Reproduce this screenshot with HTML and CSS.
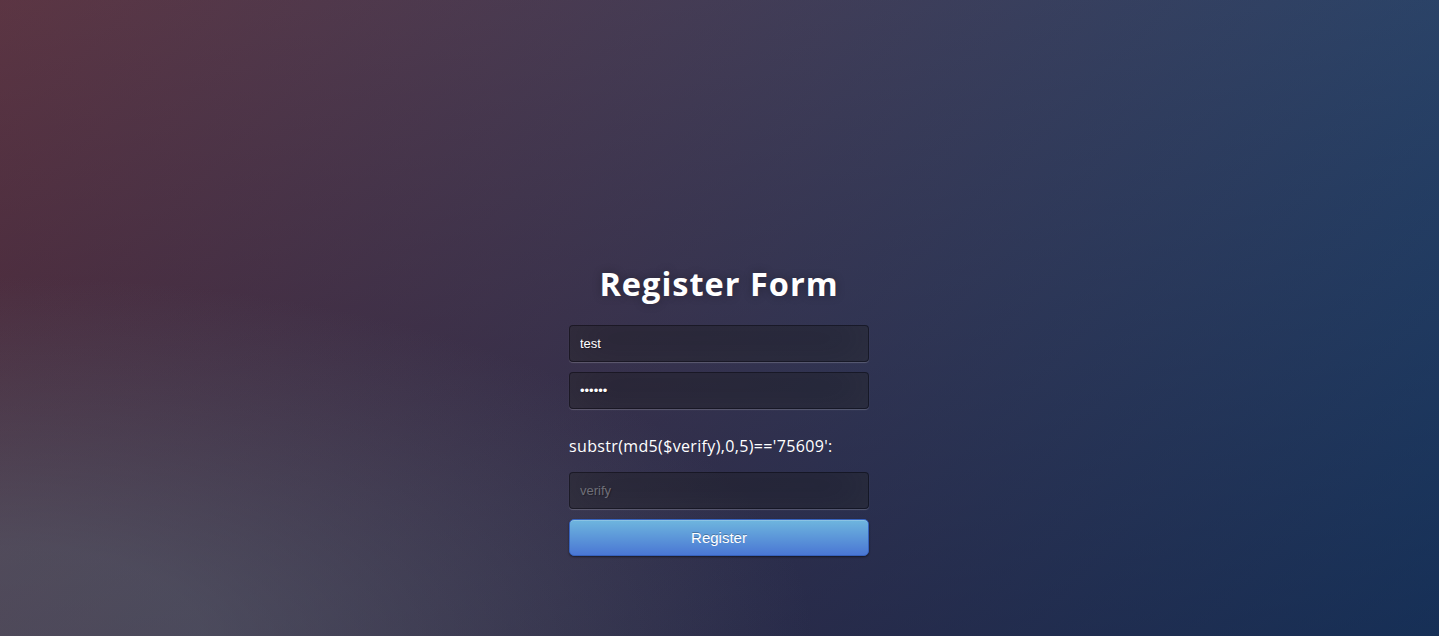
FILE: index.html
```
<!DOCTYPE html>
<html lang="en">
<head>
<meta charset="utf-8">
<title>Register Form</title>
<link rel="stylesheet" href="styles.css">
</head>
<body>
<div class="page">
  <form class="login">
    <h1 class="title">Register Form</h1>
    <input class="field" type="text" name="username" value="test">
    <input class="field" type="password" name="password" value="123456">
    <p class="hint">substr(md5($verify),0,5)=='75609':</p>
    <input class="field" type="text" name="verify" placeholder="verify">
    <button class="btn" type="button">Register</button>
  </form>
</div>
</body>
</html>
```
FILE: styles.css
```
html, body {
  margin: 0;
  width: 100%;
  height: 100%;
  overflow: hidden;
}
body {
  font-family: "Open Sans", "Noto Sans", sans-serif;
  background-color: #092756;
  background-image:
    radial-gradient(ellipse farthest-corner at 0% 100%, rgba(104,128,138,.4) 10%, rgba(138,114,76,0) 40%),
    linear-gradient(to bottom, rgba(57,173,219,.25) 0%, rgba(42,60,87,.4) 100%),
    linear-gradient(135deg, #670d10 0%, #092756 100%);
}
.page {
  display: flex;
  justify-content: center;
  padding-top: 264px;
  padding-right: 1px;
}
.login {
  width: 300px;
  display: flex;
  flex-direction: column;
}
.title {
  margin: 0 0 21px;
  color: #fff;
  font-size: 32.5px;
  line-height: 40px;
  font-weight: 700;
  letter-spacing: 1px;
  text-align: center;
  text-shadow: 0 0 10px rgba(0,0,0,.3);
}
.field {
  box-sizing: border-box;
  width: 100%;
  height: 37px;
  margin: 0 0 10px;
  padding: 10px;
  font-family: "Liberation Sans", Arial, sans-serif;
  font-size: 13px;
  color: #fff;
  background: rgba(0,0,0,.3);
  border: 1px solid rgba(0,0,0,.3);
  border-radius: 4px;
  outline: none;
  text-shadow: 1px 1px 1px rgba(0,0,0,.3);
  box-shadow: inset 0 -5px 45px rgba(100,100,100,.2), 0 1px 1px rgba(255,255,255,.2);
}
.field::placeholder {
  color: #6f6f78;
}
.hint {
  margin: 16px 0 15px;
  color: #fff;
  font-size: 16px;
  line-height: 22px;
  letter-spacing: 0.35px;
}
.btn {
  box-sizing: border-box;
  width: 100%;
  height: 37px;
  padding: 9px 14px;
  font-family: "Liberation Sans", Arial, sans-serif;
  font-size: 15px;
  color: #fff;
  text-shadow: 0 -1px 0 rgba(0,0,0,.25);
  background-color: #4a77d4;
  background-image: linear-gradient(to bottom, #6eb6de, #4a77d4);
  border: 1px solid #3762bc;
  border-radius: 5px;
  box-shadow: inset 0 1px 0 rgba(255,255,255,.2), 0 1px 2px rgba(0,0,0,.5);
  cursor: pointer;
}
```
